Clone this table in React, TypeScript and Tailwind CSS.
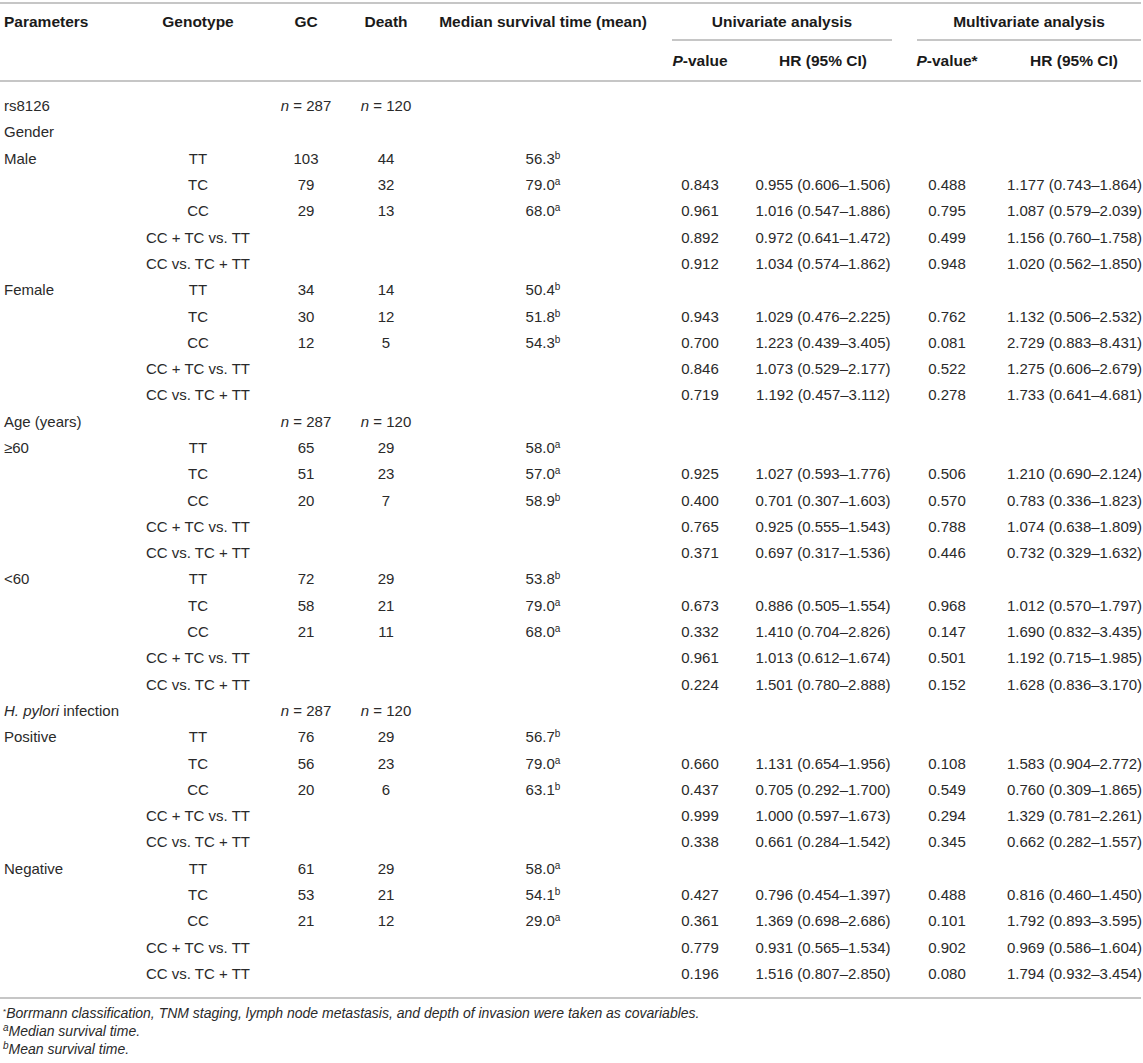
import React from "react";

type Row = {
  param?: React.ReactNode;
  geno?: string;
  gc?: React.ReactNode;
  death?: React.ReactNode;
  median?: [string, string];
  uniP?: string;
  uniHR?: string;
  multiP?: string;
  multiHR?: string;
};

const N = ({ v }: { v: string }) => (
  <span>
    <i>n</i> = {v}
  </span>
);

const cmp = (a: string[], b: string[]): Row[] => [
  { geno: "CC + TC vs. TT", uniP: a[0], uniHR: a[1], multiP: a[2], multiHR: a[3] },
  { geno: "CC vs. TC + TT", uniP: b[0], uniHR: b[1], multiP: b[2], multiHR: b[3] },
];

const rows: Row[] = [
  { param: "rs8126", gc: <N v="287" />, death: <N v="120" /> },
  { param: "Gender" },
  { param: "Male", geno: "TT", gc: "103", death: "44", median: ["56.3", "b"] },
  { geno: "TC", gc: "79", death: "32", median: ["79.0", "a"], uniP: "0.843", uniHR: "0.955 (0.606–1.506)", multiP: "0.488", multiHR: "1.177 (0.743–1.864)" },
  { geno: "CC", gc: "29", death: "13", median: ["68.0", "a"], uniP: "0.961", uniHR: "1.016 (0.547–1.886)", multiP: "0.795", multiHR: "1.087 (0.579–2.039)" },
  ...cmp(
    ["0.892", "0.972 (0.641–1.472)", "0.499", "1.156 (0.760–1.758)"],
    ["0.912", "1.034 (0.574–1.862)", "0.948", "1.020 (0.562–1.850)"]
  ),
  { param: "Female", geno: "TT", gc: "34", death: "14", median: ["50.4", "b"] },
  { geno: "TC", gc: "30", death: "12", median: ["51.8", "b"], uniP: "0.943", uniHR: "1.029 (0.476–2.225)", multiP: "0.762", multiHR: "1.132 (0.506–2.532)" },
  { geno: "CC", gc: "12", death: "5", median: ["54.3", "b"], uniP: "0.700", uniHR: "1.223 (0.439–3.405)", multiP: "0.081", multiHR: "2.729 (0.883–8.431)" },
  ...cmp(
    ["0.846", "1.073 (0.529–2.177)", "0.522", "1.275 (0.606–2.679)"],
    ["0.719", "1.192 (0.457–3.112)", "0.278", "1.733 (0.641–4.681)"]
  ),
  { param: "Age (years)", gc: <N v="287" />, death: <N v="120" /> },
  { param: "≥60", geno: "TT", gc: "65", death: "29", median: ["58.0", "a"] },
  { geno: "TC", gc: "51", death: "23", median: ["57.0", "a"], uniP: "0.925", uniHR: "1.027 (0.593–1.776)", multiP: "0.506", multiHR: "1.210 (0.690–2.124)" },
  { geno: "CC", gc: "20", death: "7", median: ["58.9", "b"], uniP: "0.400", uniHR: "0.701 (0.307–1.603)", multiP: "0.570", multiHR: "0.783 (0.336–1.823)" },
  ...cmp(
    ["0.765", "0.925 (0.555–1.543)", "0.788", "1.074 (0.638–1.809)"],
    ["0.371", "0.697 (0.317–1.536)", "0.446", "0.732 (0.329–1.632)"]
  ),
  { param: "<60", geno: "TT", gc: "72", death: "29", median: ["53.8", "b"] },
  { geno: "TC", gc: "58", death: "21", median: ["79.0", "a"], uniP: "0.673", uniHR: "0.886 (0.505–1.554)", multiP: "0.968", multiHR: "1.012 (0.570–1.797)" },
  { geno: "CC", gc: "21", death: "11", median: ["68.0", "a"], uniP: "0.332", uniHR: "1.410 (0.704–2.826)", multiP: "0.147", multiHR: "1.690 (0.832–3.435)" },
  ...cmp(
    ["0.961", "1.013 (0.612–1.674)", "0.501", "1.192 (0.715–1.985)"],
    ["0.224", "1.501 (0.780–2.888)", "0.152", "1.628 (0.836–3.170)"]
  ),
  {
    param: (
      <span>
        <i>H. pylori</i> infection
      </span>
    ),
    gc: <N v="287" />,
    death: <N v="120" />,
  },
  { param: "Positive", geno: "TT", gc: "76", death: "29", median: ["56.7", "b"] },
  { geno: "TC", gc: "56", death: "23", median: ["79.0", "a"], uniP: "0.660", uniHR: "1.131 (0.654–1.956)", multiP: "0.108", multiHR: "1.583 (0.904–2.772)" },
  { geno: "CC", gc: "20", death: "6", median: ["63.1", "b"], uniP: "0.437", uniHR: "0.705 (0.292–1.700)", multiP: "0.549", multiHR: "0.760 (0.309–1.865)" },
  ...cmp(
    ["0.999", "1.000 (0.597–1.673)", "0.294", "1.329 (0.781–2.261)"],
    ["0.338", "0.661 (0.284–1.542)", "0.345", "0.662 (0.282–1.557)"]
  ),
  { param: "Negative", geno: "TT", gc: "61", death: "29", median: ["58.0", "a"] },
  { geno: "TC", gc: "53", death: "21", median: ["54.1", "b"], uniP: "0.427", uniHR: "0.796 (0.454–1.397)", multiP: "0.488", multiHR: "0.816 (0.460–1.450)" },
  { geno: "CC", gc: "21", death: "12", median: ["29.0", "a"], uniP: "0.361", uniHR: "1.369 (0.698–2.686)", multiP: "0.101", multiHR: "1.792 (0.893–3.595)" },
  ...cmp(
    ["0.779", "0.931 (0.565–1.534)", "0.902", "0.969 (0.586–1.604)"],
    ["0.196", "1.516 (0.807–2.850)", "0.080", "1.794 (0.932–3.454)"]
  ),
];

const cols = "grid grid-cols-[140px_116px_100px_60px_254px_60px_186px_62px_163px]";

function Rule() {
  return <div className="h-[2px] bg-[#c6c6c6]" />;
}

export default function App() {
  return (
    <div className="w-[1143px] h-[1063px] bg-white pt-[2px] font-['Liberation_Sans',Arial,sans-serif] overflow-hidden">
      <div className="w-[1141px]">
        <Rule />

        {/* Header */}
        <div className={`${cols} grid-rows-[37px_39px] text-[15.5px] font-bold text-[#1a1a1a] leading-5`}>
          <div className="row-span-2 pl-[4px] pt-[8px]">Parameters</div>
          <div className="row-span-2 pt-[8px] text-center">Genotype</div>
          <div className="row-span-2 pt-[8px] text-center">GC</div>
          <div className="row-span-2 pt-[8px] text-center">Death</div>
          <div className="row-span-2 pt-[8px] text-center whitespace-nowrap">Median survival time (mean)</div>
          <div className="col-span-2 ml-[2px] mr-[24px] flex items-center justify-center border-b-2 border-[#c6c6c6]">
            Univariate analysis
          </div>
          <div className="col-span-2 ml-[1px] flex items-center justify-center border-b-2 border-[#c6c6c6]">
            Multivariate analysis
          </div>
          <div className="flex items-center justify-center whitespace-nowrap">
            <span>
              <i>P</i>-value
            </span>
          </div>
          <div className="flex items-center justify-center">HR (95% CI)</div>
          <div className="flex items-center justify-center whitespace-nowrap">
            <span>
              <i>P</i>-value*
            </span>
          </div>
          <div className="flex items-center justify-center pl-[29px]">HR (95% CI)</div>
        </div>

        <Rule />

        {/* Body */}
        <div className="pt-[11px] pb-[10px] text-[15px] text-[#2a2a2a] leading-5">
          {rows.map((r, i) => (
            <div key={i} className={`${cols} h-[26.3px] items-center whitespace-nowrap`}>
              <div className="pl-[4px]">{r.param}</div>
              <div className="text-center">{r.geno}</div>
              <div className="text-center">{r.gc}</div>
              <div className="text-center">{r.death}</div>
              <div className="text-center">
                {r.median && (
                  <span>
                    {r.median[0]}
                    <sup className="text-[10px]">{r.median[1]}</sup>
                  </span>
                )}
              </div>
              <div className="text-center">{r.uniP}</div>
              <div className="text-center">{r.uniHR}</div>
              <div className="text-center">{r.multiP}</div>
              <div className="text-center pl-[29px]">{r.multiHR}</div>
            </div>
          ))}
        </div>

        <Rule />

        {/* Footnotes */}
        <div className="pt-[5px] pl-[3px] text-[14px] italic text-[#2a2a2a] leading-[18px]">
          <p>
            <sup className="text-[8px] not-italic">*</sup>Borrmann classification, TNM staging, lymph node metastasis, and depth of invasion were taken as covariables.
          </p>
          <p>
            <sup className="text-[10px]">a</sup>Median survival time.
          </p>
          <p>
            <sup className="text-[10px]">b</sup>Mean survival time.
          </p>
        </div>
      </div>
    </div>
  );
}
